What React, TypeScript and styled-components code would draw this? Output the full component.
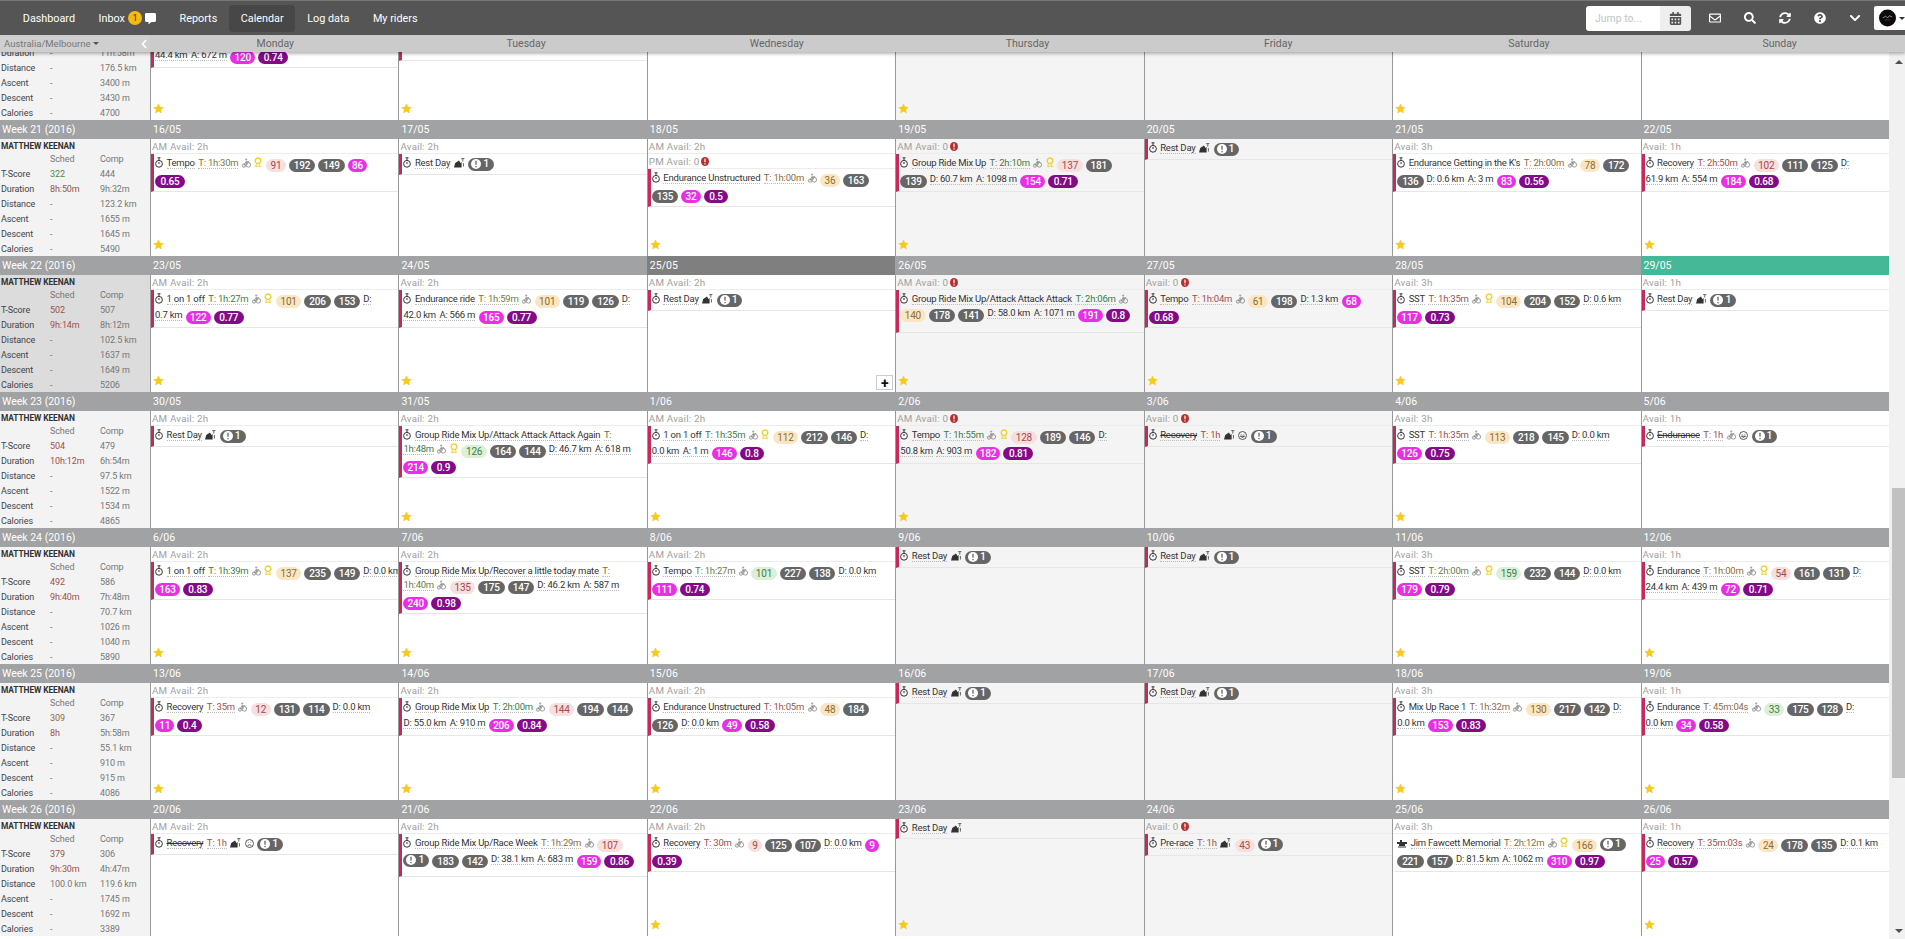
import React from "react";
import styled, { createGlobalStyle } from "styled-components";
import { FaCalendarAlt, FaChevronDown, FaChevronLeft, FaCommentAlt, FaQuestionCircle, FaRegEnvelope, FaSearch, FaSyncAlt } from "react-icons/fa";

const Global = createGlobalStyle`
  html, body { margin: 0; padding: 0; height: 100%; overflow: hidden; background: #fff; }
  body { font-family: Roboto, "Liberation Sans", sans-serif; font-size: 10px; color: #333; }
  * { box-sizing: border-box; }
`;

const Page = styled.div`display:flex;flex-direction:column;height:100vh;overflow:hidden;`;
const TopBar = styled.header`display:flex;align-items:center;height:35px;flex:none;padding-left:11px;background:#555;border-top:1px solid #777;color:#fff;`;
const NavItem = styled.a<{ $active?: boolean }>`
  display:flex;align-items:center;gap:3px;height:27px;padding:0 11.8px;font-size:10.8px;color:#fff;border-radius:4px;
  background:${p => (p.$active ? "#474747" : "transparent")};
`;
const Badge = styled.span`display:flex;align-items:center;justify-content:center;width:14px;height:14px;border-radius:50%;background:#f4b914;color:#333;font-size:9px;`;
const RightTools = styled.div`display:flex;align-items:center;margin-left:auto;`;
const JumpBox = styled.div`display:flex;height:25px;margin-right:6px;`;
const JumpInput = styled.div`width:74px;padding:0 9px;background:#fff;color:#c4c4c4;font-size:10.5px;line-height:25px;border-radius:3px 0 0 3px;`;
const JumpButton = styled.div`display:flex;align-items:center;justify-content:center;width:31px;background:#eee;color:#555;font-size:13px;border-radius:0 3px 3px 0;`;
const ToolIcon = styled.span`display:flex;align-items:center;justify-content:center;width:35px;color:#fff;font-size:12px;`;
const AvatarBox = styled.div`display:flex;align-items:center;gap:3px;width:31px;height:24px;margin-left:2px;padding-left:5px;background:#fff;border-radius:2px 0 0 2px;`;
const AvatarCaret = styled.span`width:0;height:0;border-left:3px solid transparent;border-right:3px solid transparent;border-top:3px solid #333;`;

const DayHeader = styled.div`position:relative;z-index:2;display:grid;grid-template-columns:150px repeat(7,1fr);flex:none;height:17px;background:#cbcbcb;box-shadow:0 2px 3px rgba(0,0,0,.28);`;
const ZoneCell = styled.div`display:flex;align-items:center;justify-content:space-between;padding:0 1px 0 4px;color:#777;font-size:9.5px;background:#cfcfcf;`;
const ZoneCaret = styled.span`display:inline-block;margin-left:3px;vertical-align:2px;border-left:3px solid transparent;border-right:3px solid transparent;border-top:3px solid #555;`;
const Collapse = styled.span`display:flex;color:#fff;font-size:10px;`;
const DayName = styled.div`text-align:center;color:#666;font-size:10.5px;line-height:17px;`;

const Main = styled.div`display:flex;flex:1;min-height:0;`;
const Scroller = styled.main`flex:1;min-width:0;overflow:hidden;`;
const Weeks = styled.div`margin-top:-68px;`;
const Band = styled.div`display:grid;grid-template-columns:150px repeat(7,1fr);height:19px;background:#a0a2a4;`;
const BandTitle = styled.div`padding-left:2px;color:#fff;font-size:10.5px;line-height:19px;`;
const BandDate = styled.div<{ $tone?: "dark" | "today" }>`
  padding-left:3px;color:#fff;font-size:10.5px;line-height:19px;
  background:${p => (p.$tone === "dark" ? "#7f7f7f" : p.$tone === "today" ? "#45b898" : "transparent")};
`;
const WeekBody = styled.div`display:grid;grid-template-columns:150px repeat(7,1fr);height:117px;`;
const Stats = styled.div<{ $current?: boolean }>`
  display:grid;grid-template-columns:49px 50px 1fr;grid-auto-rows:15px;grid-template-rows:13px 14px;padding-left:1px;
  background:${p => (p.$current ? "#dcdcdc" : "#f3f3f3")};font-size:9px;letter-spacing:-.1px;color:#777;align-items:center;
`;
const RiderName = styled.div`grid-column:1 / -1;font-weight:700;color:#333;font-size:8.4px;`;
const StatLabel = styled.div`color:#444;`;
const StatPlan = styled.div<{ $tone?: string }>`color:${p => p.$tone || "#777"};`;
const Cell = styled.div<{ $muted?: boolean }>`
  position:relative;display:flex;flex-direction:column;min-width:0;overflow:hidden;border-left:1px solid #999;
  background:${p => (p.$muted ? "#f4f4f4" : "#fff")};
`;
const AvailRow = styled.div`display:flex;align-items:center;gap:2px;flex:none;height:15px;padding-left:1px;color:#a0a0a0;font-size:9.8px;letter-spacing:.2px;border-bottom:1px solid #ececec;`;
const EventBox = styled.div<{ $tall?: boolean; $plain?: boolean }>`
  flex:none;min-height:${p => (p.$tall ? "43px" : "0")};padding:2px 0 3px 1px;line-height:14px;white-space:nowrap;font-size:9.5px;letter-spacing:-.22px;color:#333;
  border-left:3px solid ${p => (p.$plain ? "transparent" : "#c8285a")};border-bottom:1px solid #e6e6e6;
`;
const Dotted = styled.span<{ $strike?: boolean; $color?: string }>`
  margin-right:3.5px;border-bottom:1px dotted #bbb;color:${p => p.$color || "#333"};
  text-decoration:${p => (p.$strike ? "line-through" : "none")};
`;
const Pill = styled.span<{ $bg: string; $fg?: string; $light?: boolean; $pad?: number }>`
  display:inline-block;height:13px;margin-right:3px;padding:0 ${p => p.$pad ?? 5}px;border-radius:7px;line-height:13px;vertical-align:-3px;font-size:10px;letter-spacing:-.2px;
  font-weight:${p => (p.$light ? 400 : 500)};background:${p => p.$bg};color:${p => p.$fg || "#fff"};
`;
const WarnPill = styled.span`display:inline-flex;align-items:center;gap:2px;height:13px;margin-right:3px;padding:0 5px 0 3px;border-radius:7px;vertical-align:-3px;background:#666;color:#fff;font-size:10.5px;font-weight:500;`;
const Glyph = styled.svg`display:inline-block;margin-right:3.5px;vertical-align:-2px;overflow:visible;`;
const StarMark = styled.svg`display:block;flex:none;margin:auto 0 6px 2px;`;
const AddButton = styled.div`position:absolute;right:2px;bottom:2px;display:flex;align-items:center;justify-content:center;width:17px;height:15px;background:#fff;border:1px solid #ccc;color:#111;font-size:14px;font-weight:700;line-height:1;`;

const ScrollTrack = styled.aside`display:flex;flex-direction:column;align-items:stretch;flex:none;width:16px;padding-left:3px;background:#f1f1f1;`;
const ScrollArrow = styled.div<{ $down?: boolean }>`
  flex:none;align-self:center;margin:${p => (p.$down ? "auto 0 6px" : "8px 0 0")};width:0;height:0;border-left:4px solid transparent;border-right:4px solid transparent;
  ${p => (p.$down ? "border-top:4px solid #505050;" : "border-bottom:4px solid #505050;")}
`;
const ScrollThumb = styled.div`flex:none;height:290px;margin-top:424px;background:#c1c1c1;`;

type Tone = "g" | "o" | "b" | "r";
const timeColor: Record<Tone, string> = { g: "#3f7a4a", o: "#6f7a4a", b: "#8f6a3c", r: "#a34d4d" };
const tagColor: Record<"g" | "o" | "r", [string, string]> = {
  g: ["#dcefd8", "#3f7f3f"],
  o: ["#fbe6c4", "#8c6d2f"],
  r: ["#f6dfdf", "#a8484a"],
};
type Tok =
  | string
  | number
  | { time: string; tone: Tone }
  | { tag: number; tone: "g" | "o" | "r" }
  | { pink: number }
  | { purple: number }
  | { icon: "bike" | "rib" | "rest" | "smile" | "sad" }
  | { warn: true }
  | { nl: true };
const T = (time: string, tone: Tone): Tok => ({ time, tone });
const tag = (n: number, tone: "g" | "o" | "r"): Tok => ({ tag: n, tone });
const K = (pink: number): Tok => ({ pink });
const U = (purple: number): Tok => ({ purple });
const NL: Tok = { nl: true };
const WARN: Tok = { warn: true };
const BIKE: Tok = { icon: "bike" };
const RIB: Tok = { icon: "rib" };
const REST: Tok = { icon: "rest" };
const SMILE: Tok = { icon: "smile" };
const SAD: Tok = { icon: "sad" };

interface Ev { title?: string; strike?: boolean; race?: boolean; tall?: boolean; parts: Tok[] }
interface Day { date: string; avail?: [string, boolean?][]; ev?: Ev; star?: boolean; muted?: boolean; tone?: "dark" | "today"; add?: boolean }
interface Week { label: string; current?: boolean; plan: [string, string?][]; comp: string[]; days: Day[] }

const AM2: [string, boolean?][] = [["AM Avail: 2h"]];
const A2: [string, boolean?][] = [["Avail: 2h"]];
const A3: [string, boolean?][] = [["Avail: 3h"]];
const A1: [string, boolean?][] = [["Avail: 1h"]];
const AM0: [string, boolean?][] = [["AM Avail: 0", true]];
const A0: [string, boolean?][] = [["Avail: 0", true]];
const restDay: Ev = { title: "Rest Day", parts: [REST, WARN] };

const GREEN = "#4d8a4d";
const RED = "#a34d4d";
const BROWN = "#8f6a3c";
const dash: [string] = ["-"];

const weeks: Week[] = [
  {
    label: "Week 20 (2016)",
    plan: [dash, dash, dash, dash, dash, dash],
    comp: ["-", "11h:58m", "176.5 km", "3400 m", "3430 m", "4700"],
    days: [
      { date: "9/05", avail: AM2, star: true, ev: { parts: [NL, NL, "44.4 km", "A: 672 m", K(120), U(0.74)] } },
      { date: "10/05", avail: A2, star: true, ev: { tall: true, parts: [] } },
      { date: "11/05" },
      { date: "12/05", muted: true, star: true },
      { date: "13/05", muted: true },
      { date: "14/05", star: true },
      { date: "15/05" },
    ],
  },
  {
    label: "Week 21 (2016)",
    plan: [["322", GREEN], ["8h:50m", RED], dash, dash, dash, dash],
    comp: ["444", "9h:32m", "123.2 km", "1655 m", "1645 m", "5490"],
    days: [
      { date: "16/05", avail: AM2, star: true, ev: { title: "Tempo", parts: [T("T: 1h:30m", "o"), BIKE, RIB, tag(91, "r"), 192, 149, K(86), NL, U(0.65)] } },
      { date: "17/05", avail: A2, ev: restDay },
      { date: "18/05", avail: [["AM Avail: 2h"], ["PM Avail: 0", true]], star: true, ev: { title: "Endurance Unstructured", parts: [T("T: 1h:00m", "b"), BIKE, tag(36, "o"), 163, NL, 135, K(32), U(0.5)] } },
      { date: "19/05", avail: AM0, muted: true, star: true, ev: { title: "Group Ride Mix Up", parts: [T("T: 2h:10m", "g"), BIKE, RIB, tag(137, "r"), 181, NL, 139, "D: 60.7 km", "A: 1098 m", K(154), U(0.71)] } },
      { date: "20/05", muted: true, ev: restDay },
      { date: "21/05", avail: A3, star: true, ev: { title: "Endurance Getting in the K's", parts: [T("T: 2h:00m", "b"), BIKE, tag(78, "o"), 172, NL, 136, "D: 0.6 km", "A: 3 m", K(83), U(0.56)] } },
      { date: "22/05", avail: A1, star: true, ev: { title: "Recovery", parts: [T("T: 2h:50m", "r"), BIKE, tag(102, "r"), 111, 125, "D:", NL, "61.9 km", "A: 554 m", K(184), U(0.68)] } },
    ],
  },
  {
    label: "Week 22 (2016)",
    current: true,
    plan: [["502", RED], ["9h:14m", RED], dash, dash, dash, dash],
    comp: ["507", "8h:12m", "102.5 km", "1637 m", "1649 m", "5206"],
    days: [
      { date: "23/05", avail: AM2, star: true, ev: { title: "1 on 1 off", parts: [T("T: 1h:27m", "g"), BIKE, RIB, tag(101, "o"), 206, 153, "D:", NL, "0.7 km", K(122), U(0.77)] } },
      { date: "24/05", avail: A2, star: true, ev: { title: "Endurance ride", parts: [T("T: 1h:59m", "o"), BIKE, tag(101, "o"), 119, 126, "D:", NL, "42.0 km", "A: 566 m", K(165), U(0.77)] } },
      { date: "25/05", avail: AM2, tone: "dark", add: true, ev: restDay },
      { date: "26/05", avail: AM0, muted: true, star: true, ev: { title: "Group Ride Mix Up/Attack Attack Attack", tall: true, parts: [T("T: 2h:06m", "g"), BIKE, NL, tag(140, "o"), 178, 141, "D: 58.0 km", "A: 1071 m", K(191), U(0.8)] } },
      { date: "27/05", avail: A0, muted: true, star: true, ev: { title: "Tempo", parts: [T("T: 1h:04m", "r"), BIKE, tag(61, "o"), 198, "D: 1.3 km", K(68), NL, U(0.68)] } },
      { date: "28/05", avail: A3, star: true, ev: { title: "SST", parts: [T("T: 1h:35m", "r"), BIKE, RIB, tag(104, "o"), 204, 152, "D: 0.6 km", NL, K(117), U(0.73)] } },
      { date: "29/05", avail: A1, tone: "today", ev: restDay },
    ],
  },
  {
    label: "Week 23 (2016)",
    plan: [["504", RED], ["10h:12m", RED], dash, dash, dash, dash],
    comp: ["479", "6h:54m", "97.5 km", "1522 m", "1534 m", "4865"],
    days: [
      { date: "30/05", avail: AM2, ev: restDay },
      { date: "31/05", avail: A2, star: true, ev: { title: "Group Ride Mix Up/Attack Attack Attack Again", parts: [T("T:", "g"), NL, T("1h:48m", "g"), BIKE, RIB, tag(126, "g"), 164, 144, "D: 46.7 km", "A: 618 m", NL, K(214), U(0.9)] } },
      { date: "1/06", avail: AM2, star: true, ev: { title: "1 on 1 off", parts: [T("T: 1h:35m", "g"), BIKE, RIB, tag(112, "o"), 212, 146, "D:", NL, "0.0 km", "A: 1 m", K(146), U(0.8)] } },
      { date: "2/06", avail: AM0, muted: true, star: true, ev: { title: "Tempo", parts: [T("T: 1h:55m", "g"), BIKE, RIB, tag(128, "r"), 189, 146, "D:", NL, "50.8 km", "A: 903 m", K(182), U(0.81)] } },
      { date: "3/06", avail: A0, muted: true, ev: { title: "Recovery", strike: true, parts: [T("T: 1h", "r"), REST, SMILE, WARN] } },
      { date: "4/06", avail: A3, star: true, ev: { title: "SST", parts: [T("T: 1h:35m", "r"), BIKE, tag(113, "o"), 218, 145, "D: 0.0 km", NL, K(126), U(0.75)] } },
      { date: "5/06", avail: A1, ev: { title: "Endurance", strike: true, parts: [T("T: 1h", "r"), BIKE, SMILE, WARN] } },
    ],
  },
  {
    label: "Week 24 (2016)",
    plan: [["492", RED], ["9h:40m", RED], dash, dash, dash, dash],
    comp: ["586", "7h:48m", "70.7 km", "1026 m", "1040 m", "5890"],
    days: [
      { date: "6/06", avail: AM2, star: true, ev: { title: "1 on 1 off", parts: [T("T: 1h:39m", "g"), BIKE, RIB, tag(137, "o"), 235, 149, "D: 0.0 km", NL, K(163), U(0.83)] } },
      { date: "7/06", avail: A2, star: true, ev: { title: "Group Ride Mix Up/Recover a little today mate", parts: [T("T:", "o"), NL, T("1h:40m", "o"), BIKE, tag(135, "r"), 175, 147, "D: 46.2 km", "A: 587 m", NL, K(240), U(0.98)] } },
      { date: "8/06", avail: AM2, star: true, ev: { title: "Tempo", parts: [T("T: 1h:27m", "o"), BIKE, tag(101, "g"), 227, 138, "D: 0.0 km", NL, K(111), U(0.74)] } },
      { date: "9/06", muted: true, ev: restDay },
      { date: "10/06", muted: true, ev: restDay },
      { date: "11/06", avail: A3, star: true, ev: { title: "SST", parts: [T("T: 2h:00m", "o"), BIKE, RIB, tag(159, "g"), 232, 144, "D: 0.0 km", NL, K(179), U(0.79)] } },
      { date: "12/06", avail: A1, star: true, ev: { title: "Endurance", parts: [T("T: 1h:00m", "b"), BIKE, RIB, tag(54, "r"), 161, 131, "D:", NL, "24.4 km", "A: 439 m", K(72), U(0.71)] } },
    ],
  },
  {
    label: "Week 25 (2016)",
    plan: [["309", BROWN], ["8h", RED], dash, dash, dash, dash],
    comp: ["367", "5h:58m", "55.1 km", "910 m", "915 m", "4086"],
    days: [
      { date: "13/06", avail: AM2, star: true, ev: { title: "Recovery", parts: [T("T: 35m", "r"), BIKE, tag(12, "r"), 131, 114, "D: 0.0 km", NL, K(11), U(0.4)] } },
      { date: "14/06", avail: A2, star: true, ev: { title: "Group Ride Mix Up", parts: [T("T: 2h:00m", "g"), BIKE, tag(144, "r"), 194, 144, NL, "D: 55.0 km", "A: 910 m", K(206), U(0.84)] } },
      { date: "15/06", avail: AM2, star: true, ev: { title: "Endurance Unstructured", parts: [T("T: 1h:05m", "r"), BIKE, tag(48, "o"), 184, NL, 126, "D: 0.0 km", K(49), U(0.58)] } },
      { date: "16/06", muted: true, ev: restDay },
      { date: "17/06", muted: true, ev: restDay },
      { date: "18/06", avail: A3, star: true, ev: { title: "Mix Up Race 1", parts: [T("T: 1h:32m", "b"), BIKE, tag(130, "o"), 217, 142, "D:", NL, "0.0 km", K(153), U(0.83)] } },
      { date: "19/06", avail: A1, star: true, ev: { title: "Endurance", parts: [T("T: 45m:04s", "b"), BIKE, tag(33, "g"), 175, 128, "D:", NL, "0.0 km", K(34), U(0.58)] } },
    ],
  },
  {
    label: "Week 26 (2016)",
    plan: [["379", RED], ["9h:30m", RED], ["100.0 km"], dash, dash, dash],
    comp: ["306", "4h:47m", "119.6 km", "1745 m", "1692 m", "3389"],
    days: [
      { date: "20/06", avail: AM2, ev: { title: "Recovery", strike: true, parts: [T("T: 1h", "r"), REST, SAD, WARN] } },
      { date: "21/06", avail: A2, ev: { title: "Group Ride Mix Up/Race Week", tall: true, parts: [T("T: 1h:29m", "b"), BIKE, tag(107, "r"), NL, WARN, 183, 142, "D: 38.1 km", "A: 683 m", K(159), U(0.86)] } },
      { date: "22/06", avail: AM2, star: true, ev: { title: "Recovery", parts: [T("T: 30m", "r"), BIKE, tag(9, "r"), 125, 107, "D: 0.0 km", K(9), NL, U(0.39)] } },
      { date: "23/06", muted: true, star: true, ev: { title: "Rest Day", parts: [REST] } },
      { date: "24/06", avail: A0, muted: true, ev: { title: "Pre-race", parts: [T("T: 1h", "r"), REST, tag(43, "r"), WARN] } },
      { date: "25/06", avail: A3, ev: { title: "Jim Fawcett Memorial", race: true, parts: [T("T: 2h:12m", "b"), BIKE, RIB, tag(166, "o"), WARN, NL, 221, 157, "D: 81.5 km", "A: 1062 m", K(310), U(0.97)] } },
      { date: "26/06", avail: A1, star: true, ev: { title: "Recovery", parts: [T("T: 35m:03s", "r"), BIKE, tag(24, "o"), 178, 135, "D: 0.1 km", NL, K(25), U(0.57)] } },
    ],
  },
];

const Watch = () => (
  <Glyph width="8" height="11" viewBox="0 0 8 11" fill="none" stroke="#333">
    <circle cx="4" cy="6.8" r="3.4" strokeWidth="1" />
    <path d="M2.5 .8h3M4 1v2M4 5v2" strokeWidth="1" />
  </Glyph>
);
const Bike = () => (
  <Glyph width="9" height="10" viewBox="0 0 10 10" fill="none" stroke="#777" strokeWidth=".8">
    <circle cx="2.2" cy="7.9" r="1.8" />
    <circle cx="7" cy="7" r="2.6" />
    <path d="M3.6 .8h2.2M4.6 .8v1.6" />
    <path d="M2.2 7.9 4.4 3.6 8 3.6M4.4 3.6 6.2 5.8 4.8 7.6" />
  </Glyph>
);
const Ribbon = () => (
  <Glyph width="8" height="11" viewBox="0 0 8 11" fill="none" stroke="#f0d03a" strokeWidth="1.4">
    <circle cx="4" cy="3.8" r="2.8" />
    <path d="M2.3 6.5 1.8 10 4 8.8 6.2 10 5.7 6.5" strokeWidth="1" />
  </Glyph>
);
const RestIcon = () => (
  <Glyph width="11" height="10" viewBox="0 0 11 10">
    <path d="M0 9.5 1.2 5 5 2.6 6.4 5 7.6 4v5.5z" fill="#333" />
    <path d="M7.2 .6 10.4 .6M8.8 1v2.6M9.4 5v3.6" stroke="#555" strokeWidth=".9" fill="none" />
  </Glyph>
);
const Face = ({ sad }: { sad?: boolean }) => (
  <Glyph width="9" height="9" viewBox="0 0 9 9" fill="none" stroke="#333" strokeWidth=".8">
    <circle cx="4.5" cy="4.5" r="4" />
    <path d="M2.8 3.4h.6M5.6 3.4h.6" />
    <path d={sad ? "M2.6 6.5Q4.5 5 6.4 6.5" : "M2.4 5.2h4.2Q4.5 7.6 2.4 5.2"} />
  </Glyph>
);
const RaceIcon = () => (
  <Glyph width="10" height="9" viewBox="0 0 10 9">
    <path d="M0 3h3V1h2v2h5v2H8v2H2V5H0z" fill="#333" />
    <path d="M1 8h8" stroke="#333" />
  </Glyph>
);
const WarnDot = () => (
  <svg width="10" height="10" viewBox="0 0 10 10">
    <circle cx="5" cy="5" r="5" fill="#fff" />
    <path d="M5 1.8v4M5 7v1.2" stroke="#666" strokeWidth="1.3" />
  </svg>
);
const AlertDot = () => (
  <svg width="8" height="9" viewBox="0 0 8 9">
    <ellipse cx="4" cy="4.5" rx="4" ry="4.5" fill="#b5312f" />
    <path d="M4 1.6v3.6M4 6.2v1.2" stroke="#fff" strokeWidth="1.2" />
  </svg>
);
const Star = () => (
  <StarMark width="11" height="11" viewBox="0 0 24 24">
    <path d="M12 1l3.4 7.3 7.9 1-5.8 5.5 1.5 7.9L12 18.8l-7 3.9 1.5-7.9L.7 9.3l7.9-1z" fill="#f7cb16" />
  </StarMark>
);
const Logo = () => (
  <svg width="18" height="18" viewBox="0 0 18 18">
    <circle cx="9" cy="9" r="9" fill="#0b0b0b" />
    <path d="M4 9 7 7l2 2 2-2.4L14 8" stroke="#c9c9c9" strokeWidth=".7" fill="none" />
    <path d="M6 11h6" stroke="#a33" strokeWidth=".6" />
  </svg>
);

const renderTok = (tok: Tok, i: number) => {
  if (typeof tok === "string") return <Dotted key={i}>{tok}</Dotted>;
  if (typeof tok === "number") return <Pill key={i} $bg="#666">{tok}</Pill>;
  if ("nl" in tok) return <br key={i} />;
  if ("warn" in tok) return <WarnPill key={i}><WarnDot />1</WarnPill>;
  if ("time" in tok) return <Dotted key={i} $color={timeColor[tok.tone]}>{tok.time}</Dotted>;
  if ("tag" in tok) return <Pill key={i} $light $pad={4.5} $bg={tagColor[tok.tone][0]} $fg={tagColor[tok.tone][1]}>{tok.tag}</Pill>;
  if ("pink" in tok) return <Pill key={i} $pad={4.2} $bg="#e92fe6">{tok.pink}</Pill>;
  if ("purple" in tok) return <Pill key={i} $pad={5.5} $bg="#840a88">{tok.purple}</Pill>;
  switch (tok.icon) {
    case "bike": return <Bike key={i} />;
    case "rib": return <Ribbon key={i} />;
    case "rest": return <RestIcon key={i} />;
    case "smile": return <Face key={i} />;
    default: return <Face key={i} sad />;
  }
};

const labels = ["T-Score", "Duration", "Distance", "Ascent", "Descent", "Calories"];

const WeekBlock = ({ week }: { week: Week }) => (
  <section>
    <Band>
      <BandTitle>{week.label}</BandTitle>
      {week.days.map(d => <BandDate key={d.date} $tone={d.tone}>{d.date}</BandDate>)}
    </Band>
    <WeekBody>
      <Stats $current={week.current}>
        <RiderName>MATTHEW KEENAN</RiderName>
        <div />
        <div>Sched</div>
        <div>Comp</div>
        {labels.map((l, i) => (
          <React.Fragment key={l}>
            <StatLabel>{l}</StatLabel>
            <StatPlan $tone={week.plan[i][1]}>{week.plan[i][0]}</StatPlan>
            <div>{week.comp[i]}</div>
          </React.Fragment>
        ))}
      </Stats>
      {week.days.map(d => (
        <Cell key={d.date} $muted={d.muted}>
          {d.avail?.map(([text, alert]) => (
            <AvailRow key={text}>{text}{alert && <AlertDot />}</AvailRow>
          ))}
          {d.ev && (
            <EventBox $tall={d.ev.tall} $plain={d.ev.race}>
              {d.ev.title && (
                <>
                  {d.ev.race ? <RaceIcon /> : <Watch />}
                  <Dotted $strike={d.ev.strike}>{d.ev.title}</Dotted>
                </>
              )}
              {d.ev.parts.map(renderTok)}
            </EventBox>
          )}
          {d.star && <Star />}
          {d.add && <AddButton>+</AddButton>}
        </Cell>
      ))}
    </WeekBody>
  </section>
);

export default function App() {
  return (
    <Page>
      <Global />
      <TopBar>
        <NavItem>Dashboard</NavItem>
        <NavItem>Inbox <Badge>1</Badge><FaCommentAlt size={11} /></NavItem>
        <NavItem>Reports</NavItem>
        <NavItem $active>Calendar</NavItem>
        <NavItem>Log data</NavItem>
        <NavItem>My riders</NavItem>
        <RightTools>
          <JumpBox>
            <JumpInput>Jump to...</JumpInput>
            <JumpButton><FaCalendarAlt /></JumpButton>
          </JumpBox>
          <ToolIcon><FaRegEnvelope /></ToolIcon>
          <ToolIcon><FaSearch /></ToolIcon>
          <ToolIcon><FaSyncAlt /></ToolIcon>
          <ToolIcon><FaQuestionCircle /></ToolIcon>
          <ToolIcon><FaChevronDown /></ToolIcon>
          <AvatarBox><Logo /><AvatarCaret /></AvatarBox>
        </RightTools>
      </TopBar>
      <DayHeader>
        <ZoneCell>
          <span>Australia/Melbourne<ZoneCaret /></span>
          <Collapse><FaChevronLeft /></Collapse>
        </ZoneCell>
        {["Monday", "Tuesday", "Wednesday", "Thursday", "Friday", "Saturday", "Sunday"].map(n => <DayName key={n}>{n}</DayName>)}
      </DayHeader>
      <Main>
        <Scroller>
          <Weeks>
            {weeks.map(w => <WeekBlock key={w.label} week={w} />)}
          </Weeks>
        </Scroller>
        <ScrollTrack>
          <ScrollArrow />
          <ScrollThumb />
          <ScrollArrow $down />
        </ScrollTrack>
      </Main>
    </Page>
  );
}
